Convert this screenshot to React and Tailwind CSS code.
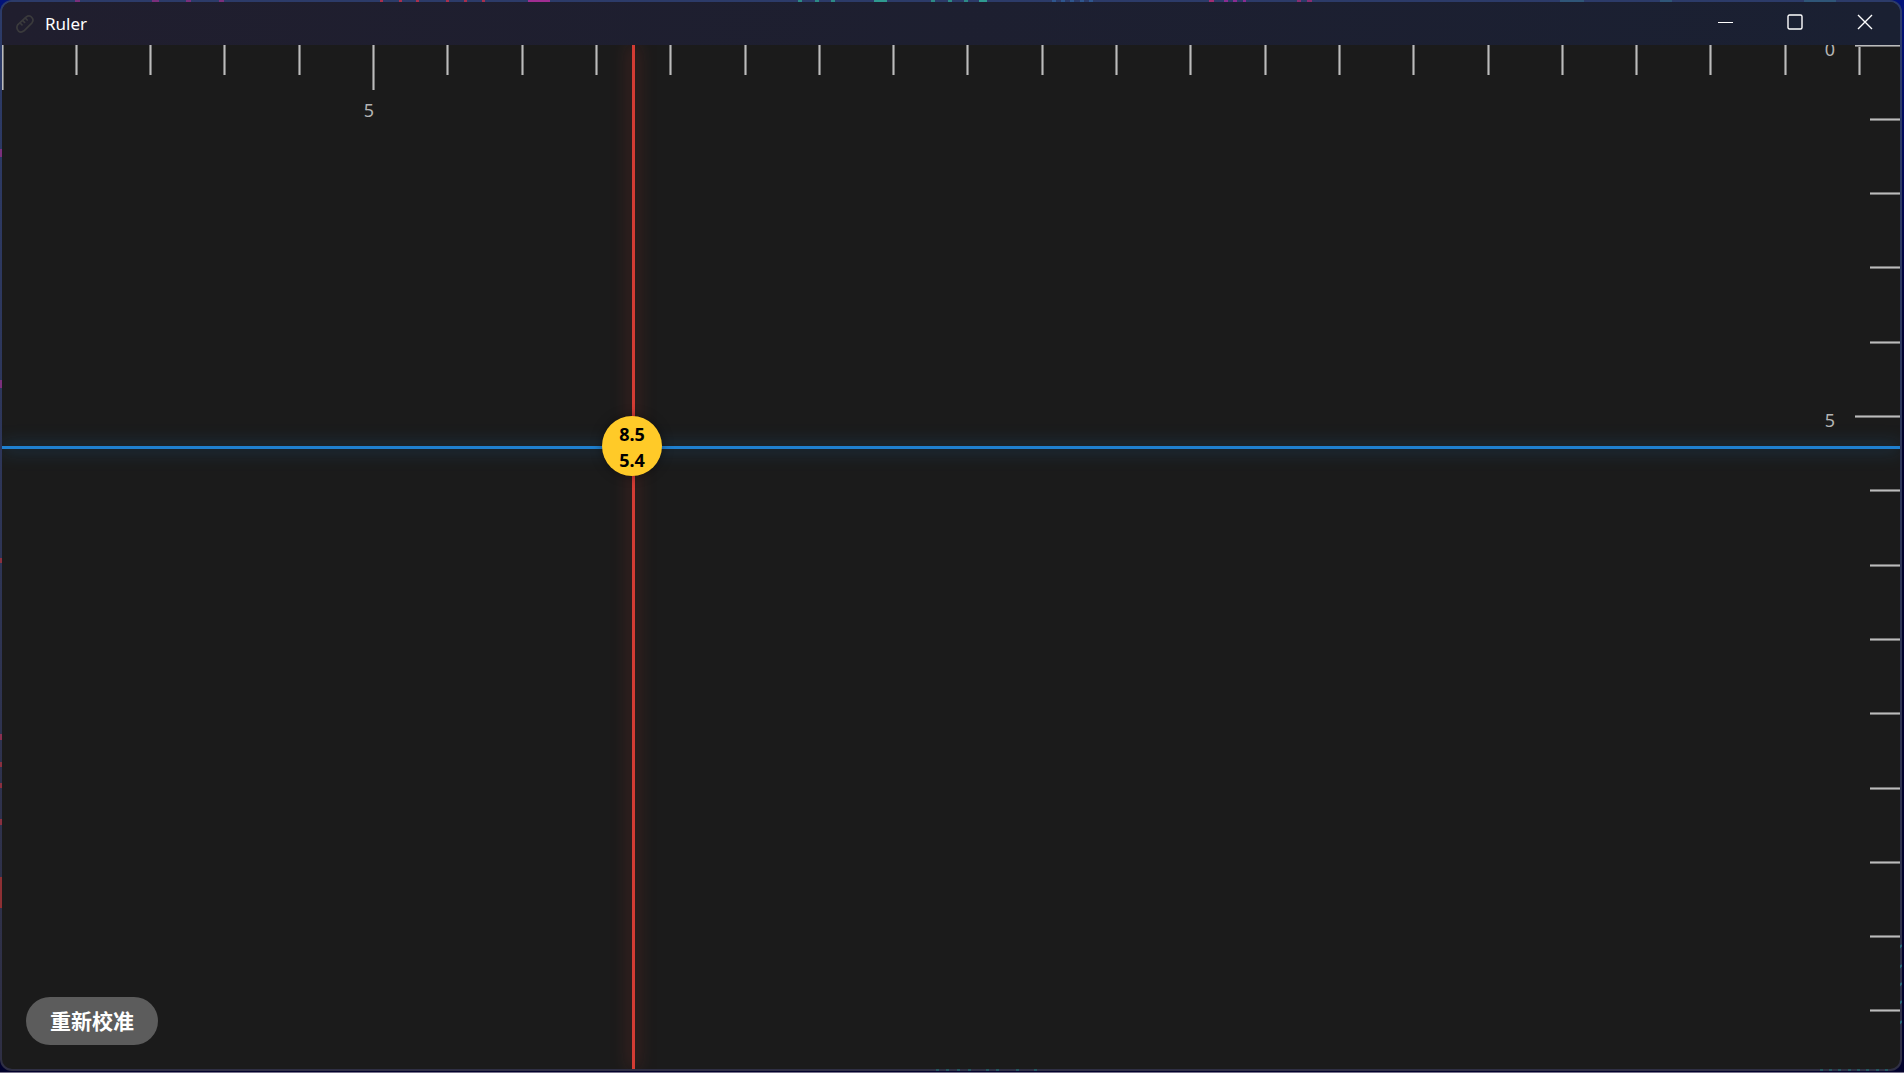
// Calibrated scale: 743 screen pixels are ten units long.
const toPixels = (units) => Math.floor((units * 743) / 10);
const topMarks = Array.from({ length: 26 }, (_, i) => i);
const sideMarks = Array.from({ length: 14 }, (_, i) => i);

const topSpecks = [
  [75, 5, "#7a2f7c"], [152, 7, "#7a2f7c"], [186, 5, "#7a2f7c"], [219, 5, "#7a2f7c"],
  [380, 3, "#a8304e"], [399, 3, "#a8304e"], [416, 3, "#a8304e"], [446, 3, "#a8304e"], [464, 3, "#a8304e"], [482, 3, "#a8304e"],
  [528, 22, "#a02d92"],
  [798, 4, "#2d8a86"], [815, 4, "#2d8a86"], [831, 4, "#2d8a86"], [874, 13, "#2f9a90"],
  [931, 4, "#2d8a86"], [948, 4, "#2d8a86"], [964, 4, "#2d8a86"], [979, 8, "#2f9a90"],
  [1052, 4, "#2f568e"], [1061, 4, "#2f568e"], [1070, 4, "#2f568e"], [1080, 4, "#2f568e"], [1089, 4, "#2f568e"],
  [1209, 5, "#a02d72"], [1224, 4, "#8a2d92"], [1233, 4, "#8a2d92"], [1243, 3, "#8a2d92"], [1297, 4, "#8a2d72"], [1307, 5, "#8a2d72"],
  [1560, 24, "#2f5678"], [1660, 12, "#2f5678"], [1804, 32, "#2f5678"],
];
const leftSpecks = [
  [149, 8, "#7a2f7c"], [380, 8, "#7a2f7c"], [558, 5, "#8a3040"], [734, 6, "#8a3050"], [762, 5, "#8a3040"],
  [783, 5, "#8a3040"], [819, 6, "#8a3040"], [877, 31, "#8e3034"],
];
const rightSpecks = [945, 965, 983, 1001, 1021];
const bottomSpecks = [936, 946, 957, 968, 986, 996, 1016, 1034, 1820, 1829, 1838, 1848, 1857, 1866, 1876, 1885];

function Wallpaper() {
  return (
    <svg aria-hidden="true" className="absolute inset-0 size-full">
      {topSpecks.map(([x, w, color]) => (
        <rect key={x} x={x} y="0" width={w} height="2" fill={color} />
      ))}
      {leftSpecks.map(([y, h, color]) => (
        <rect key={y} x="0" y={y} width="2" height={h} fill={color} />
      ))}
      <svg x="100%" overflow="visible">
        {rightSpecks.map((y) => (
          <path key={y} d={`M-4 ${y + 4}l4-4`} stroke="#2a6a78" strokeWidth="2" />
        ))}
      </svg>
      <svg y="100%" overflow="visible">
        {bottomSpecks.map((x) => (
          <rect key={x} x={x} y="-3" width="3" height="3" fill="#24585f" />
        ))}
      </svg>
    </svg>
  );
}

function RulerIcon() {
  return (
    <svg viewBox="0 0 18 18" className="size-[18px]" fill="none" stroke="#3a3a3c" strokeWidth="1.7" strokeLinejoin="round" strokeLinecap="round">
      <path d="M1.9 9.6 10 2.1Q13.4-.3 15.7 2.3 18.2 4.8 16 7.8L8 15.8Q4.7 18.3 2.3 15.8-.3 12.8 1.9 9.6Z" />
      <path d="m4.2 8 1.8 1.8M6.8 5.6l1.8 1.8M9.4 3.2l1.8 1.8" />
    </svg>
  );
}

function TitleBar() {
  return (
    <header className="flex h-[43px] shrink-0 items-center justify-between bg-linear-to-r from-[#201e2e] to-[#1a2032] text-white">
      <div className="flex h-10 items-center gap-[11px] pl-[14px]">
        <RulerIcon />
        <h1 className="text-[17px] leading-6">Ruler</h1>
      </div>
      <div className="flex h-10 self-start">
        <button type="button" aria-label="Minimize" className="flex w-[70px] items-center justify-center">
          <svg viewBox="0 0 16 16" className="size-4" stroke="currentColor"><path d="M1 8.5h15" /></svg>
        </button>
        <button type="button" aria-label="Maximize" className="flex w-[70px] items-center justify-center">
          <svg viewBox="0 0 16 16" className="size-4" fill="none" stroke="currentColor" strokeWidth="1.4"><rect x="1" y="1" width="14" height="14" rx="1.5" /></svg>
        </button>
        <button type="button" aria-label="Close" className="flex w-[70px] items-center justify-center">
          <svg viewBox="0 0 16 16" className="size-4" stroke="currentColor" strokeWidth="1.4"><path d="m1 1 14 14M15 1 1 15" /></svg>
        </button>
      </div>
    </header>
  );
}

function TopScale() {
  return topMarks.map((n) => (
    <div key={n} className="absolute top-0 -translate-x-px" style={{ left: toPixels(n) }}>
      <div className={n === 0 || n === 5 ? "h-[45px] w-[3px] border-x border-[#757575] bg-[#bcbcbc]" : "h-[30px] w-[3px] border-x border-[#757575] bg-[#bcbcbc]"} />
      {n === 5 && <span className="absolute top-[53px] right-px text-[18px] leading-6 text-[#b4b4b4]">{n}</span>}
    </div>
  ));
}

function SideScale() {
  return sideMarks.map((n) => (
    <div key={n} className="absolute right-0 -translate-y-px" style={{ top: toPixels(n) }}>
      <div className={n === 0 || n === 5 ? "h-[3px] w-[45px] border-y border-[#757575] bg-[#bcbcbc]" : "h-[3px] w-[30px] border-y border-[#757575] bg-[#bcbcbc]"} />
      {(n === 0 || n === 5) && <span className="absolute -top-[7px] right-[65px] text-[18px] leading-6 text-[#b4b4b4]">{n}</span>}
    </div>
  ));
}

export default function App() {
  return (
    <div className="flex h-screen flex-col border-b border-[#77728a] bg-linear-to-b from-[#02137a] to-[#02022c] to-35% pr-[2px] pb-px font-['Noto_Sans','Noto_Sans_CJK_SC',sans-serif]">
      <div className="relative flex min-h-0 flex-1 flex-col overflow-hidden rounded-xl bg-linear-to-b from-[#2c3b69] to-[#2f2f44] p-[2px]">
        <Wallpaper />
        <div className="relative flex min-h-0 flex-1 flex-col overflow-hidden rounded-[10px] bg-[#1b1b1b]">
          <TitleBar />
          <main className="relative flex flex-1 flex-col items-start justify-end overflow-hidden px-6 py-6">
            <TopScale />
            <SideScale />
            <div className="absolute inset-y-0 left-[630px] w-[3px] bg-[#d33c34] shadow-[0_0_18px_rgba(244,67,54,0.6)]" />
            <div className="absolute inset-x-0 top-[401px] h-[3px] bg-[#1f80d0] shadow-[0_0_18px_rgba(33,150,243,0.6)]" />
            <div className="absolute top-[371px] left-[600px] flex size-[60px] flex-col items-center justify-center rounded-full bg-[#ffca28] pt-[2px] text-[18px] leading-[26px] font-bold text-black shadow-[0_0_12px_rgba(0,0,0,0.4)]">
              <span>8.5</span>
              <span>5.4</span>
            </div>
            <button type="button" className="h-12 rounded-full bg-[#5c5c5c] px-6 pt-[2px] text-[21px] font-bold text-white">重新校准</button>
          </main>
        </div>
      </div>
    </div>
  );
}
